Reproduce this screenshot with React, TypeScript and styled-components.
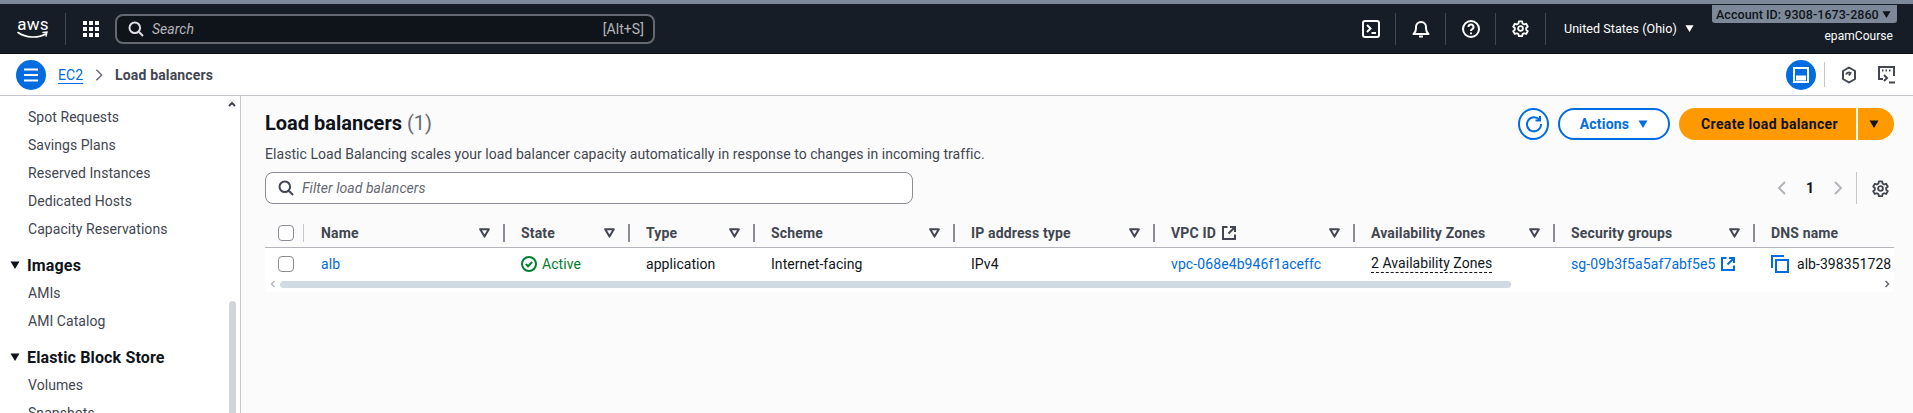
import React from 'react'
import styled, { createGlobalStyle } from 'styled-components'

const GlobalStyle = createGlobalStyle`
  html, body { margin: 0; padding: 0; height: 100%; overflow: hidden; background: #fff; }
  body { font-family: 'Roboto', 'Noto Sans', sans-serif; font-size: 14px; color: #0f141a; letter-spacing: 0.05px; }
  #root { height: 100%; }
`

const Page = styled.div`
  width: 1913px;
  height: 413px;
  display: flex;
  flex-direction: column;
  overflow: hidden;
`

const TopNav = styled.header`
  height: 49px;
  border-top: 4px solid #7d8998;
  border-bottom: 1px solid #0b0f14;
  background: #161d26;
  color: #fff;
  display: flex;
  align-items: center;
  padding: 0 16px 0 17px;
  flex: none;
`

const Logo = styled.div`
  width: 32px;
  height: 32px;
  display: flex;
  flex-direction: column;
  align-items: center;
  justify-content: center;
`

const LogoText = styled.span`
  font-size: 17px;
  line-height: 14px;
  letter-spacing: 0.2px;
`

const NavDivider = styled.div`
  width: 1px;
  height: 32px;
  background: #424650;
  flex: none;
`

const GridButton = styled.div`
  width: 49px;
  display: flex;
  justify-content: center;
  margin-left: 0;
`

const SearchBox = styled.div`
  width: 540px;
  height: 30px;
  box-sizing: border-box;
  margin-left: 0;
  border: 2px solid #656871;
  border-radius: 8px;
  background: #0f141a;
  display: flex;
  align-items: center;
  padding: 0 9px 0 11px;
  color: #b4b4bb;
`

const SearchHint = styled.span`
  font-style: italic;
  margin-left: 8px;
  flex: 1;
`

const NavRight = styled.div`
  margin-left: auto;
  display: flex;
  align-items: center;
  height: 100%;
`

const IconCell = styled.div`
  width: 49px;
  height: 32px;
  display: flex;
  align-items: center;
  justify-content: center;
`

const Region = styled.div`
  width: 166px;
  box-sizing: border-box;
  padding-left: 18px;
  display: flex;
  align-items: center;
  gap: 8px;
  font-size: 12.5px;
  color: #fff;
  white-space: nowrap;
`

const AccountBlock = styled.div`
  width: 185px;
  height: 100%;
  display: flex;
  flex-direction: column;
  align-items: flex-end;
`

const AccountTag = styled.div`
  width: 185px;
  height: 18px;
  margin-top: 1px;
  box-sizing: border-box;
  padding: 0 0 0 4px;
  background: #7d8998;
  border-radius: 0 0 3px 3px;
  color: #0f141a;
  font-size: 12.5px;
  font-weight: 500;
  display: flex;
  align-items: center;
  gap: 3px;
  white-space: nowrap;
`

const AccountName = styled.div`
  margin-top: 5px;
  font-size: 12px;
  line-height: 16px;
  color: #fff;
  padding-right: 4px;
`

const Crumbs = styled.div`
  height: 41px;
  background: #fff;
  border-bottom: 1px solid #c6c6cd;
  display: flex;
  align-items: center;
  padding: 0 17px 0 16px;
  flex: none;
`

const RoundBlue = styled.div`
  width: 30px;
  height: 30px;
  border-radius: 50%;
  background: #006ce0;
  display: flex;
  align-items: center;
  justify-content: center;
  flex: none;
`

const CrumbLink = styled.a`
  color: #006ce0;
  text-decoration: underline;
  text-underline-offset: 3px;
  margin-left: 12px;
`

const CrumbSep = styled.span`
  display: flex;
  margin: 0 9px 0 9px;
`

const CrumbCurrent = styled.span`
  font-weight: 700;
  color: #424650;
  letter-spacing: 0.15px;
`

const CrumbTools = styled.div`
  margin-left: auto;
  display: flex;
  align-items: center;
`

const ToolDivider = styled.div`
  width: 1px;
  height: 25px;
  background: #c6c6cd;
  margin: 0 15px 0 8px;
`

const ToolIcon = styled.div`
  width: 18px;
  height: 18px;
  display: flex;
  margin-right: ${(p: { $gap?: number }) => p.$gap ?? 0}px;
`

const Main = styled.div`
  flex: 1;
  display: flex;
  min-height: 0;
`

const Sidebar = styled.nav`
  width: 241px;
  flex: none;
  box-sizing: border-box;
  border-right: 1px solid #c6c6cd;
  background: #fff;
  position: relative;
  overflow: hidden;
  padding-top: 7px;
`

const SideItem = styled.div`
  height: 28px;
  line-height: 28px;
  padding-left: 28px;
  color: #424650;
  white-space: nowrap;
`

const SideHead = styled.div`
  height: 28px;
  margin-top: 8px;
  display: flex;
  align-items: center;
  gap: 7px;
  padding-left: 10px;
  font-size: 16px;
  font-weight: 700;
  color: #0f141a;
  white-space: nowrap;
  letter-spacing: 0.15px;
`

const SideUpArrow = styled.div`
  position: absolute;
  top: 5px;
  right: 4px;
  display: flex;
`

const SideThumb = styled.div`
  position: absolute;
  top: 205px;
  bottom: 0;
  right: 4px;
  width: 7px;
  border-radius: 4px 4px 0 0;
  background: #d1d5db;
`

const Content = styled.main`
  flex: 1;
  min-width: 0;
  background: #fbfbfb;
  padding: 12px 19px 0 24px;
  overflow: hidden;
`

const HeadRow = styled.div`
  display: flex;
  justify-content: space-between;
  height: 32px;
`

const Title = styled.h1`
  margin: 0;
  font-size: 20px;
  line-height: 30px;
  font-weight: 700;
  color: #0f141a;
  letter-spacing: 0;
`

const Count = styled.span`
  font-weight: 400;
  color: #656871;
`

const Actions = styled.div`
  display: flex;
  align-items: center;
  gap: 9px;
`

const RefreshButton = styled.div`
  width: 31px;
  height: 32px;
  box-sizing: border-box;
  border: 2px solid #006ce0;
  border-radius: 50%;
  display: flex;
  align-items: center;
  justify-content: center;
  background: #fff;
`

const OutlineButton = styled.div`
  width: 112px;
  height: 32px;
  box-sizing: border-box;
  border: 2px solid #006ce0;
  border-radius: 16px;
  display: flex;
  align-items: center;
  justify-content: center;
  gap: 9px;
  color: #006ce0;
  font-weight: 700;
  letter-spacing: 0.2px;
  background: #fff;
`

const SplitGroup = styled.div`
  display: flex;
  gap: 2px;
`

const PrimaryButton = styled.div<{ $part: 'main' | 'side' }>`
  height: 32px;
  width: ${(p) => (p.$part === 'main' ? '177px' : '36px')};
  background: #ff9900;
  border-radius: ${(p) => (p.$part === 'main' ? '16px 0 0 16px' : '0 16px 16px 0')};
  display: flex;
  align-items: center;
  justify-content: center;
  padding: ${(p) => (p.$part === 'side' ? '0 4px 0 0' : '0 0 0 4px')};
  box-sizing: border-box;
  color: #0f141a;
  font-weight: 700;
  letter-spacing: 0.35px;
`

const Description = styled.p`
  margin: 4px 0 0;
  line-height: 20px;
  color: #424650;
`

const FilterRow = styled.div`
  display: flex;
  justify-content: space-between;
  align-items: center;
  margin-top: 8px;
  height: 32px;
`

const FilterBox = styled.div`
  width: 648px;
  height: 32px;
  box-sizing: border-box;
  border: 1px solid #8c8c94;
  border-radius: 8px;
  background: #fff;
  display: flex;
  align-items: center;
  padding-left: 12px;
  gap: 8px;
`

const FilterHint = styled.span`
  font-style: italic;
  color: #656871;
`

const Pager = styled.div`
  display: flex;
  align-items: center;
  height: 32px;
  margin-right: 5px;
`

const PagerNumber = styled.span`
  width: 40px;
  text-align: center;
  font-weight: 700;
  color: #0f141a;
`

const PagerDivider = styled.div`
  width: 1px;
  height: 32px;
  background: #c6c6cd;
  margin: 0 15px 0 10px;
`

const Table = styled.div`
  margin-top: 14px;
  width: 1629px;
  overflow: hidden;
`

const columns = '39px 200px 125px 125px 200px 200px 200px 200px 200px 140px'

const HeaderRow = styled.div`
  display: grid;
  grid-template-columns: ${columns};
  height: 30px;
  border-bottom: 1px solid #b4b4bb;
  align-items: center;
  box-sizing: border-box;
`

const BodyRow = styled.div`
  display: grid;
  grid-template-columns: ${columns};
  height: 28px;
  padding-top: 3px;
  box-sizing: border-box;
  align-items: center;
  background: #fff;
`

const CheckCell = styled.div`
  padding-left: 13px;
  display: flex;
  align-items: center;
  height: 18px;
`

const Checkbox = styled.div`
  width: 16px;
  height: 16px;
  box-sizing: border-box;
  border: 1px solid #8c8c94;
  border-radius: 4px;
  background: #fff;
`

const HeaderCell = styled.div`
  display: flex;
  align-items: center;
  height: 18px;
  padding-left: 17px;
  font-weight: 700;
  color: #424650;
  white-space: nowrap;
  letter-spacing: 0.15px;
`

const HeaderLabel = styled.span`
  display: flex;
  align-items: center;
  gap: 6px;
  flex: 1;
`

const ColDivider = styled.div`
  width: 2px;
  height: 18px;
  background: #8c8c94;
  margin-left: 13px;
  margin-right: -1px;
`

const CheckDivider = styled.div`
  width: 1px;
  height: 18px;
  background: #c6c6cd;
  margin-left: 9px;
`

const BodyCell = styled.div<{ $gap?: number }>`
  display: flex;
  align-items: center;
  gap: ${(p) => p.$gap ?? 5}px;
  padding-left: 17px;
  white-space: nowrap;
  overflow: hidden;
  color: #0f141a;
`

const TableLink = styled.span`
  color: #006ce0;
  letter-spacing: 0.1px;
`

const ActiveText = styled.span`
  color: #00802f;
`

const Dashed = styled.span`
  border-bottom: 1px dashed #0f141a;
  line-height: 17px;
`

const ScrollRow = styled.div`
  height: 16px;
  background: #fff;
  display: flex;
  align-items: center;
`

const ScrollArrow = styled.div`
  width: 15px;
  display: flex;
  justify-content: center;
`

const ScrollThumb = styled.div`
  width: 1231px;
  height: 7px;
  border-radius: 4px;
  background: #d1d9e2;
`

const Triangle = ({ color, size = 10 }: { color: string; size?: number }) => (
  <svg width={size} height={size} viewBox="0 0 10 10" style={{ flex: 'none' }}>
    <path d="M0.5 1.5h9L5 9z" fill={color} />
  </svg>
)

const FilterCaret = () => (
  <svg width="11" height="10" viewBox="0 0 11 10" style={{ flex: 'none' }}>
    <path d="M1.2 1.2h8.6L5.5 8.6z" fill="none" stroke="#424650" strokeWidth="2" strokeLinejoin="round" />
  </svg>
)

const SearchGlyph = ({ color }: { color: string }) => (
  <svg width="16" height="16" viewBox="0 0 16 16" fill="none" stroke={color} strokeWidth="2" style={{ flex: 'none' }}>
    <circle cx="6.8" cy="6.8" r="5.3" />
    <path d="M10.8 10.8L15 15" />
  </svg>
)

const Gear = ({ color }: { color: string }) => (
  <svg width="17" height="17" viewBox="0 0 24 24" fill="none" stroke={color} strokeWidth="2.6" strokeLinejoin="round">
    <path d="M9.7 2h4.6l.6 3 2.2 1.3 2.9-1 2.3 4-2.3 2v2.4l2.3 2-2.3 4-2.9-1-2.2 1.3-.6 3H9.7l-.6-3-2.2-1.3-2.9 1-2.3-4 2.3-2v-2.4l-2.3-2 2.3-4 2.9 1L9.1 5z" />
    <circle cx="12" cy="12" r="3.4" />
  </svg>
)

const Chevron = ({ dir, color, size = 16, width = 2 }: { dir: 'left' | 'right'; color: string; size?: number; width?: number }) => (
  <svg width={size} height={size} viewBox="0 0 16 16" fill="none" stroke={color} strokeWidth={width}>
    <path d={dir === 'left' ? 'M11 2L5 8l6 6' : 'M5 2l6 6-6 6'} />
  </svg>
)

const ExternalIcon = ({ color }: { color: string }) => (
  <svg width="14" height="14" viewBox="0 0 14 14" fill="none" stroke={color} strokeWidth="2" style={{ flex: 'none' }}>
    <path d="M5.5 1H1v12h12V8.5" />
    <path d="M8 1h5v5M13 1L6.5 7.5" />
  </svg>
)

const headers = ['Name', 'State', 'Type', 'Scheme', 'IP address type']
const headersAfter = ['Availability Zones', 'Security groups']

export default function App() {
  return (
    <Page>
      <GlobalStyle />
      <TopNav>
        <Logo>
          <LogoText>aws</LogoText>
          <svg width="32" height="9" viewBox="0 0 32 9" fill="none">
            <path d="M1 1.5C9 7 21 7.5 28.5 3" stroke="#fff" strokeWidth="1.6" strokeLinecap="round" />
            <path d="M26 1.5l4-.5-1 4" stroke="#fff" strokeWidth="1.4" strokeLinecap="round" />
          </svg>
        </Logo>
        <NavDivider style={{ marginLeft: 16 }} />
        <GridButton>
          <svg width="16" height="16" viewBox="0 0 16 16" fill="#fff">
            {[0, 6, 12].flatMap((y) =>
              [0, 6, 12].map((x) => <rect key={`${x}-${y}`} x={x} y={y} width="4" height="4" />)
            )}
          </svg>
        </GridButton>
        <SearchBox>
          <SearchGlyph color="#dedee3" />
          <SearchHint>Search</SearchHint>
          <span>[Alt+S]</span>
        </SearchBox>
        <NavRight>
          <IconCell>
            <svg width="18" height="18" viewBox="0 0 18 18" fill="none" stroke="#fff" strokeWidth="2">
              <rect x="1" y="1" width="16" height="16" rx="2" />
              <path d="M5 5l3.5 3.5L5 12M9.5 13H14" />
            </svg>
          </IconCell>
          <NavDivider />
          <IconCell>
            <svg width="18" height="18" viewBox="0 0 18 18" fill="none" stroke="#fff" strokeWidth="2">
              <path d="M1.500 14h15c-1.800-1.500-2.500-3-2.500-5.500V7A5 5 0 0 0 4 7v1.500C4 11 3.300 12.500 1.500 14z" strokeLinejoin="round" />
              <path d="M7 16.500h4" />
            </svg>
          </IconCell>
          <NavDivider />
          <IconCell>
            <svg width="18" height="18" viewBox="0 0 18 18" fill="none" stroke="#fff" strokeWidth="2">
              <circle cx="9" cy="9" r="8" />
              <path d="M6.500 7a2.500 2.500 0 1 1 3.700 2.200c-.8.4-1.200 1-1.200 1.800" />
              <path d="M9 12.500v1.800" />
            </svg>
          </IconCell>
          <NavDivider />
          <IconCell>
            <Gear color="#fff" />
          </IconCell>
          <NavDivider />
          <Region>
            United States (Ohio)
            <Triangle color="#fff" size={9} />
          </Region>
          <AccountBlock>
            <AccountTag>
              Account ID: 9308-1673-2860
              <Triangle color="#0f141a" size={9} />
            </AccountTag>
            <AccountName>epamCourse</AccountName>
          </AccountBlock>
        </NavRight>
      </TopNav>
      <Crumbs>
        <RoundBlue>
          <svg width="16" height="14" viewBox="0 0 16 14" stroke="#fff" strokeWidth="2">
            <path d="M1 1.500h14M1 7h14M1 12.500h14" />
          </svg>
        </RoundBlue>
        <CrumbLink>EC2</CrumbLink>
        <CrumbSep>
          <Chevron dir="right" color="#656871" size={14} width={1.6} />
        </CrumbSep>
        <CrumbCurrent>Load balancers</CrumbCurrent>
        <CrumbTools>
          <RoundBlue>
            <svg width="16" height="16" viewBox="0 0 16 16" fill="none">
              <rect x="1" y="1" width="14" height="14" stroke="#fff" strokeWidth="2" />
              <rect x="3" y="8.500" width="10" height="5" fill="#fff" />
            </svg>
          </RoundBlue>
          <ToolDivider />
          <ToolIcon $gap={20}>
            <svg width="18" height="18" viewBox="0 0 18 18" fill="none" stroke="#424650" strokeWidth="2">
              <path d="M9 1.500l6 3.500v8l-6 3.500L3 13V5z" strokeLinejoin="round" />
              <path d="M6 8.500a3 3 0 0 1 4.500-1.500L9 9.500" />
            </svg>
          </ToolIcon>
          <ToolIcon>
            <svg width="18" height="18" viewBox="0 0 18 18" fill="none" stroke="#424650" strokeWidth="2">
              <path d="M5 13H1V1h15v9" />
              <path d="M4 4.500h1.500M7.500 4.500H9M11 4.500h1.500" />
              <path d="M6 9l3 3-3 3M11 16.500h6" />
            </svg>
          </ToolIcon>
        </CrumbTools>
      </Crumbs>
      <Main>
        <Sidebar>
          <SideUpArrow>
            <svg width="8" height="6" viewBox="0 0 8 6" fill="none" stroke="#424650" strokeWidth="2">
              <path d="M1 5l3-3 3 3" />
            </svg>
          </SideUpArrow>
          <SideItem>Spot Requests</SideItem>
          <SideItem>Savings Plans</SideItem>
          <SideItem>Reserved Instances</SideItem>
          <SideItem>Dedicated Hosts</SideItem>
          <SideItem>Capacity Reservations</SideItem>
          <SideHead>
            <Triangle color="#0f141a" />
            Images
          </SideHead>
          <SideItem>AMIs</SideItem>
          <SideItem>AMI Catalog</SideItem>
          <SideHead>
            <Triangle color="#0f141a" />
            Elastic Block Store
          </SideHead>
          <SideItem>Volumes</SideItem>
          <SideItem>Snapshots</SideItem>
          <SideThumb />
        </Sidebar>
        <Content>
          <HeadRow>
            <Title>
              Load balancers <Count>(1)</Count>
            </Title>
            <Actions>
              <RefreshButton>
                <svg width="18" height="18" viewBox="0 0 18 18" fill="none" stroke="#006ce0" strokeWidth="2">
                  <path d="M14.500 5A7 7 0 1 0 16 9" />
                  <path d="M10.500 5.500H15V1" />
                </svg>
              </RefreshButton>
              <OutlineButton>
                Actions
                <Triangle color="#006ce0" />
              </OutlineButton>
              <SplitGroup>
                <PrimaryButton $part="main">Create load balancer</PrimaryButton>
                <PrimaryButton $part="side">
                  <Triangle color="#0f141a" />
                </PrimaryButton>
              </SplitGroup>
            </Actions>
          </HeadRow>
          <Description>
            Elastic Load Balancing scales your load balancer capacity automatically in response to changes in incoming traffic.
          </Description>
          <FilterRow>
            <FilterBox>
              <SearchGlyph color="#424650" />
              <FilterHint>Filter load balancers</FilterHint>
            </FilterBox>
            <Pager>
              <Chevron dir="left" color="#b4b4bb" />
              <PagerNumber>1</PagerNumber>
              <Chevron dir="right" color="#b4b4bb" />
              <PagerDivider />
              <Gear color="#424650" />
            </Pager>
          </FilterRow>
          <Table>
            <HeaderRow>
              <CheckCell>
                <Checkbox />
                <CheckDivider />
              </CheckCell>
              {headers.map((h) => (
                <HeaderCell key={h}>
                  <HeaderLabel>{h}</HeaderLabel>
                  <FilterCaret />
                  <ColDivider />
                </HeaderCell>
              ))}
              <HeaderCell>
                <HeaderLabel>
                  VPC ID
                  <ExternalIcon color="#424650" />
                </HeaderLabel>
                <FilterCaret />
                <ColDivider />
              </HeaderCell>
              {headersAfter.map((h) => (
                <HeaderCell key={h}>
                  <HeaderLabel>{h}</HeaderLabel>
                  <FilterCaret />
                  <ColDivider />
                </HeaderCell>
              ))}
              <HeaderCell>
                <HeaderLabel>DNS name</HeaderLabel>
              </HeaderCell>
            </HeaderRow>
            <BodyRow>
              <CheckCell>
                <Checkbox />
              </CheckCell>
              <BodyCell>
                <TableLink>alb</TableLink>
              </BodyCell>
              <BodyCell>
                <svg width="16" height="16" viewBox="0 0 16 16" fill="none" stroke="#00802f" strokeWidth="2">
                  <circle cx="8" cy="8" r="7" />
                  <path d="M4.800 8l2.300 2.300 4-4.300" />
                </svg>
                <ActiveText>Active</ActiveText>
              </BodyCell>
              <BodyCell>application</BodyCell>
              <BodyCell>Internet-facing</BodyCell>
              <BodyCell>IPv4</BodyCell>
              <BodyCell>
                <TableLink>vpc-068e4b946f1aceffc</TableLink>
              </BodyCell>
              <BodyCell>
                <Dashed>2 Availability Zones</Dashed>
              </BodyCell>
              <BodyCell>
                <TableLink>sg-09b3f5a5af7abf5e5</TableLink>
                <ExternalIcon color="#006ce0" />
              </BodyCell>
              <BodyCell $gap={8}>
                <svg width="18" height="18" viewBox="0 0 18 18" fill="none" stroke="#006ce0" strokeWidth="2" style={{ flex: 'none' }}>
                  <path d="M1 13V1h12" />
                  <rect x="5" y="5" width="12" height="12" />
                </svg>
                alb-398351728
              </BodyCell>
            </BodyRow>
            <ScrollRow>
              <ScrollArrow>
                <Chevron dir="left" color="#b4b4bb" size={8} width={3} />
              </ScrollArrow>
              <ScrollThumb />
              <ScrollArrow style={{ marginLeft: 'auto' }}>
                <Chevron dir="right" color="#656871" size={8} width={3} />
              </ScrollArrow>
            </ScrollRow>
          </Table>
        </Content>
      </Main>
    </Page>
  )
}
